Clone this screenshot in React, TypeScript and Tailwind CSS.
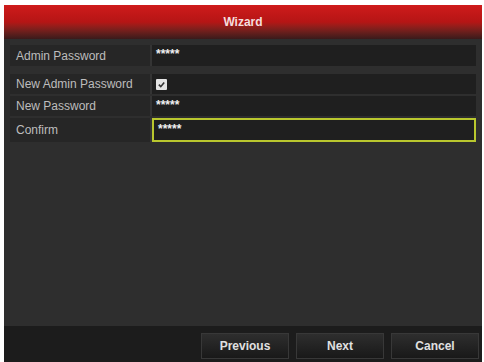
import React from "react";

const rows = [
  { label: "Admin Password", kind: "pwd" },
  { label: "New Admin Password", kind: "check" },
  { label: "New Password", kind: "pwd" },
  { label: "Confirm", kind: "focus" },
];

function Row({ label, kind, className }: { label: string; kind: string; className: string }) {
  return (
    <div className={`flex ${className}`}>
      <div className="flex w-[140px] items-center bg-[#262626] pl-[6px] text-[12px] text-[#bdbdbd]">{label}</div>
      <div className="w-[2px] bg-[#343434]" />
      <div
        className={`flex flex-1 items-center bg-[#1f1f1f] pl-[4px] ${
          kind === "focus" ? "border-2 border-[#b9c72e]" : ""
        }`}
      >
        {kind === "check" ? (
          <span className="flex h-[11px] w-[11px] items-center justify-center rounded-[1px] bg-[#e4e4e4]">
            <svg viewBox="0 0 10 10" className="h-[9px] w-[9px]">
              <path d="M2 5.2 L4.2 7.4 L8 2.8" fill="none" stroke="#333" strokeWidth="1.8" />
            </svg>
          </span>
        ) : (
          <span className="mt-[-3px] text-[12px] font-bold leading-none tracking-[0px] text-[#f0f0f0]">*****</span>
        )}
      </div>
    </div>
  );
}

function Btn({ children }: { children: React.ReactNode }) {
  return (
    <div className="flex h-[26px] w-[88px] items-center justify-center border border-[#383838] bg-gradient-to-b from-[#2e2e2e] to-[#191919] text-[12px] font-bold text-[#e0e0e0]">
      {children}
    </div>
  );
}

export default function App() {
  return (
    <div className="h-[362px] w-[484px] bg-white pl-[4px] pr-[2px] pt-[5px] font-['Liberation_Sans',Arial,sans-serif]">
      <div className="flex h-full flex-col bg-[#2e2e2e]">
        <div className="flex h-[34px] items-center justify-center bg-gradient-to-b from-[#cf1b1b] via-[#b51515] to-[#3a1a1a] text-[12px] font-bold text-[#f4dede]">
          Wizard
        </div>
        <div className="flex flex-1 flex-col px-[6px] pt-[6px]">
          <Row label={rows[0].label} kind={rows[0].kind} className="h-[21px]" />
          <div className="h-[8px]" />
          <Row label={rows[1].label} kind={rows[1].kind} className="h-[20px]" />
          <div className="h-[2px]" />
          <Row label={rows[2].label} kind={rows[2].kind} className="h-[20px]" />
          <div className="h-[2px]" />
          <Row label={rows[3].label} kind={rows[3].kind} className="h-[24px]" />
        </div>
        <div className="flex h-[36px] items-center justify-end gap-[7px] bg-[#1c1c1c] pr-[3px] pt-[4px]">
          <Btn>Previous</Btn>
          <Btn>Next</Btn>
          <Btn>Cancel</Btn>
        </div>
      </div>
    </div>
  );
}
